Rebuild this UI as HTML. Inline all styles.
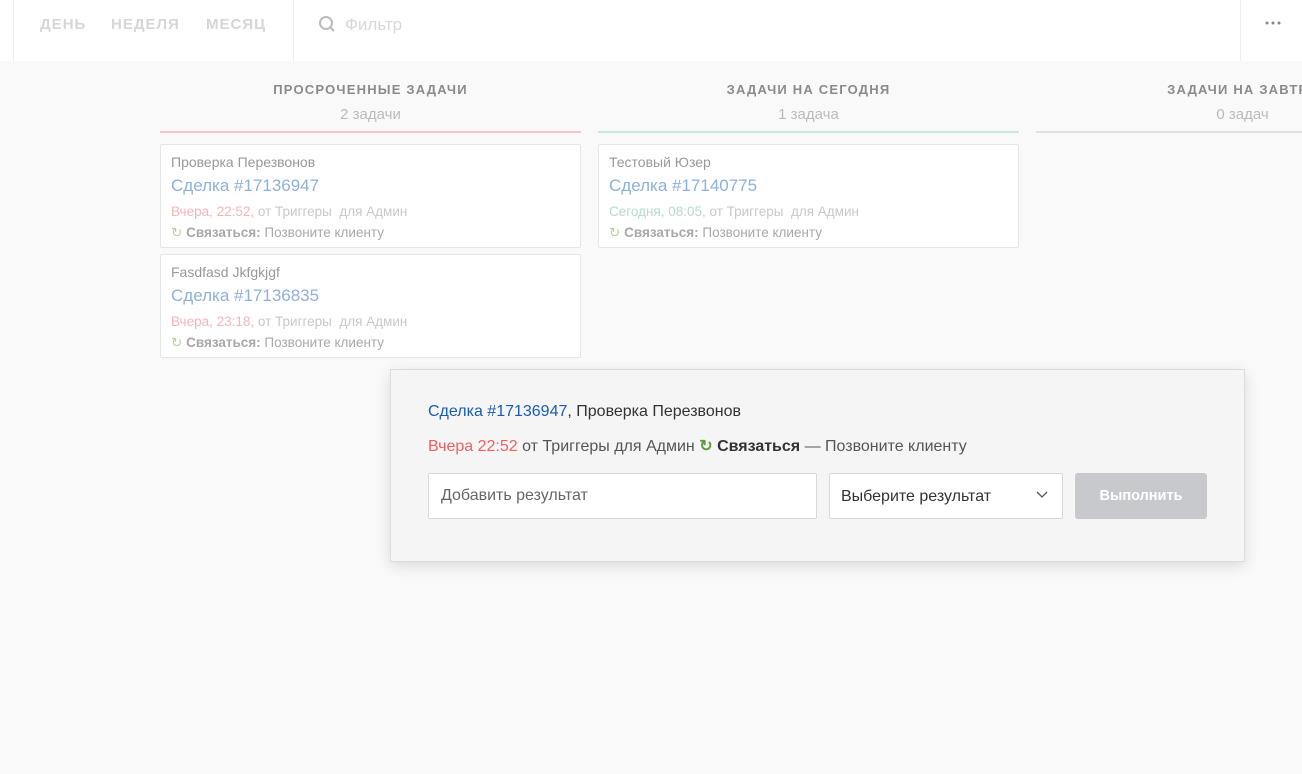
<!DOCTYPE html>
<html><head><meta charset="utf-8"><style>
body{margin:0;width:1302px;height:774px;background:#f9f9f9;font-family:"Liberation Sans",sans-serif;position:relative;overflow:hidden}
.hdr{position:absolute;left:0;top:0;width:1302px;height:61px;background:#fff}
.vl{position:absolute;top:0;height:61px;width:1px;background:#eee}
.tab{position:absolute;top:16px;font-size:15px;font-weight:bold;color:#d6d6d6;letter-spacing:1px}
.abs{position:absolute}
.ct{position:absolute;font-size:13px;font-weight:bold;letter-spacing:1.2px;color:#8a8a8a;text-align:center}
.cc{position:absolute;font-size:15px;color:#bbb;text-align:center}
.card{position:absolute;background:#fff;border:1px solid #e6e6e6;border-radius:2px;width:419px;height:102px}
.card .n{position:absolute;left:10px;top:9px;font-size:14px;color:#999}
.card .l{position:absolute;left:10px;top:31px;font-size:17px;color:#8fb0d8}
.card .d{position:absolute;left:10px;top:59px;font-size:13.5px;color:#c8c8c8}
.card .t{position:absolute;left:10px;top:80px;font-size:13.5px;color:#a8a8a8}
.pop{position:absolute;left:390px;top:369px;width:853px;height:191px;background:#f5f5f5;border:1px solid #dcdcdc;box-shadow:0 4px 14px rgba(0,0,0,.12)}
</style></head><body>
<div class="hdr">
<div class="vl" style="left:13px"></div><div class="vl" style="left:293px"></div><div class="vl" style="left:1240px"></div>
<div class="tab" style="left:40px">ДЕНЬ</div>
<div class="tab" style="left:111px">НЕДЕЛЯ</div>
<div class="tab" style="left:206px">МЕСЯЦ</div>
<svg class="abs" style="left:318px;top:15px" width="18" height="18"><circle cx="8" cy="8" r="6" fill="none" stroke="#bbb" stroke-width="2"/><path d="M12 12l4 4" stroke="#bbb" stroke-width="2"/></svg>
<div class="abs" style="left:345px;top:15px;font-size:17px;color:#d8d8d8">Фильтр</div>
<svg class="abs" style="left:1265px;top:21px" width="18" height="4"><circle cx="2" cy="2" r="1.5" fill="#888"/><circle cx="8" cy="2" r="1.5" fill="#888"/><circle cx="14" cy="2" r="1.5" fill="#888"/></svg>
</div>
<div class="ct" style="left:160px;width:421px;top:82px">ПРОСРОЧЕННЫЕ ЗАДАЧИ</div>
<div class="cc" style="left:160px;width:421px;top:106px">2 задачи</div>
<div class="abs" style="left:160px;top:131px;width:421px;height:2px;background:#f6c4c4"></div>
<div class="ct" style="left:598px;width:421px;top:82px">ЗАДАЧИ НА СЕГОДНЯ</div>
<div class="cc" style="left:598px;width:421px;top:106px">1 задача</div>
<div class="abs" style="left:598px;top:131px;width:421px;height:2px;background:#c8e8dc"></div>
<div class="ct" style="left:1032px;width:421px;top:82px">ЗАДАЧИ НА ЗАВТРА</div>
<div class="cc" style="left:1032px;width:421px;top:106px">0 задач</div>
<div class="abs" style="left:1036px;top:131px;width:300px;height:2px;background:#e2e2e2"></div>

<div class="card" style="left:160px;top:144px"><div class="n">Проверка Перезвонов</div><div class="l">Сделка #17136947</div><div class="d"><span style="color:#f5b5b5">Вчера, 22:52,</span> от Триггеры&nbsp; для Админ</div><div class="t"><span style="color:#b5d3a0">↻</span> <b>Связаться:</b> Позвоните клиенту</div></div>
<div class="card" style="left:160px;top:254px"><div class="n">Fasdfasd Jkfgkjgf</div><div class="l">Сделка #17136835</div><div class="d"><span style="color:#f5b5b5">Вчера, 23:18,</span> от Триггеры&nbsp; для Админ</div><div class="t"><span style="color:#b5d3a0">↻</span> <b>Связаться:</b> Позвоните клиенту</div></div>
<div class="card" style="left:598px;top:144px"><div class="n">Тестовый Юзер</div><div class="l">Сделка #17140775</div><div class="d"><span style="color:#b5dcc8">Сегодня, 08:05,</span> от Триггеры&nbsp; для Админ</div><div class="t"><span style="color:#b5d3a0">↻</span> <b>Связаться:</b> Позвоните клиенту</div></div>

<div class="pop">
<div class="abs" style="left:37px;top:33px;font-size:16px;color:#333"><span style="color:#1a5cb0">Сделка #17136947</span>, Проверка Перезвонов</div>
<div class="abs" style="left:37px;top:66px;font-size:16px;color:#555"><span style="color:#f06060">Вчера 22:52</span> от Триггеры для Админ <span style="color:#5a9e3a;font-weight:bold">↻</span> <b style="color:#333">Связаться</b> — Позвоните клиенту</div>
<div class="abs" style="left:37px;top:103px;width:387px;height:44px;background:#fff;border:1px solid #d8d8d8;border-radius:2px"><span class="abs" style="left:12px;top:13px;font-size:16px;color:#666">Добавить результат</span></div>
<div class="abs" style="left:438px;top:103px;width:232px;height:44px;background:#fff;border:1px solid #d8d8d8;border-radius:2px"><span class="abs" style="left:11px;top:14px;font-size:16px;color:#333">Выберите результат</span><svg class="abs" style="left:206px;top:17px" width="12" height="8"><path d="M1 1l5 5 5-5" fill="none" stroke="#555" stroke-width="1.3"/></svg></div>
<div class="abs" style="left:684px;top:103px;width:132px;height:46px;background:#c8c9cc;border-radius:3px;color:#fff;font-weight:bold;font-size:14.5px;text-align:center;line-height:46px">Выполнить</div>
</div>
</body></html>
